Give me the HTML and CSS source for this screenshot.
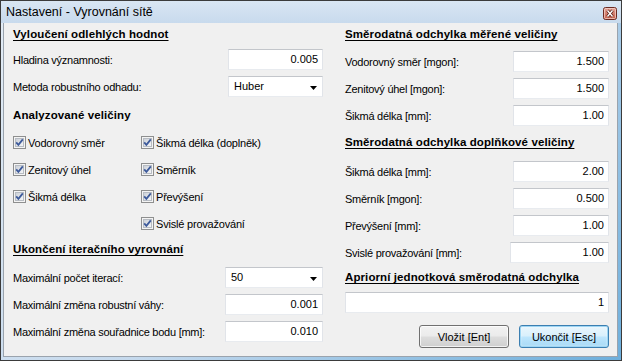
FILE: index.html
```html
<!DOCTYPE html>
<html lang="cs">
<head>
<meta charset="utf-8">
<title>Nastavení - Vyrovnání sítě</title>
<link rel="stylesheet" href="styles.css">
</head>
<body>
<svg class="defs" width="0" height="0" aria-hidden="true">
  <defs>
    <linearGradient id="cbfill" x1="0" y1="0" x2="1" y2="1">
      <stop offset="0" stop-color="#c9ced6"/>
      <stop offset="1" stop-color="#f7f8f9"/>
    </linearGradient>
    <linearGradient id="closefill" x1="0" y1="0" x2="0" y2="1">
      <stop offset="0" stop-color="#e5aa9f"/>
      <stop offset="0.5" stop-color="#d4806f"/>
      <stop offset="1" stop-color="#c4604d"/>
    </linearGradient>
  </defs>
</svg>
<div class="window">
  <div class="titlebar">
    <span class="title">Nastavení - Vyrovnání sítě</span>
    <span class="close">
      <svg width="14" height="13" viewBox="0 0 14 13">
        <rect x="0.5" y="0.5" width="13" height="12" rx="2" fill="url(#closefill)" stroke="#6b2a22"/>
        <rect x="1.5" y="1.5" width="11" height="10" rx="1" fill="none" stroke="#f6d6cf" stroke-opacity="0.7"/>
        <path d="M4.5 3.5 L9.5 9.5 M9.5 3.5 L4.5 9.5" stroke="#5a1c15" stroke-width="3"/>
        <path d="M4.5 3.5 L9.5 9.5 M9.5 3.5 L4.5 9.5" stroke="#ffffff" stroke-width="1.4"/>
      </svg>
    </span>
  </div>
  <div class="client">
    <div class="col col-left">
      <h2 class="heading ul">Vyloučení odlehlých hodnot</h2>
      <div class="rows rows-outlier">
        <div class="row"><span class="lbl">Hladina významnosti:</span><div class="field w-l1">0.005</div></div>
        <div class="row"><span class="lbl">Metoda robustního odhadu:</span><div class="combo w-l1"><span>Huber</span><svg class="arrow" width="7" height="4" viewBox="0 0 7 4"><path d="M0 0 H7 L3.5 4 Z" fill="#000"/></svg></div></div>
      </div>

      <h2 class="heading h-analyz">Analyzované veličiny</h2>
      <div class="checks">
        <label class="check"><svg class="cb" width="13" height="13" viewBox="0 0 13 13"><rect x="0.5" y="0.5" width="12" height="12" fill="#f4f4f4" stroke="#8e8f8f"/><rect x="2.5" y="2.5" width="8" height="8" fill="url(#cbfill)" stroke="#b7bcc3"/><path d="M3.2 6.3 L5.4 8.8 L9.8 3.4" fill="none" stroke="#3d5a9b" stroke-width="1.8"/></svg><span>Vodorovný směr</span></label>
        <label class="check"><svg class="cb" width="13" height="13" viewBox="0 0 13 13"><rect x="0.5" y="0.5" width="12" height="12" fill="#f4f4f4" stroke="#8e8f8f"/><rect x="2.5" y="2.5" width="8" height="8" fill="url(#cbfill)" stroke="#b7bcc3"/><path d="M3.2 6.3 L5.4 8.8 L9.8 3.4" fill="none" stroke="#3d5a9b" stroke-width="1.8"/></svg><span>Šikmá délka (doplněk)</span></label>
        <label class="check"><svg class="cb" width="13" height="13" viewBox="0 0 13 13"><rect x="0.5" y="0.5" width="12" height="12" fill="#f4f4f4" stroke="#8e8f8f"/><rect x="2.5" y="2.5" width="8" height="8" fill="url(#cbfill)" stroke="#b7bcc3"/><path d="M3.2 6.3 L5.4 8.8 L9.8 3.4" fill="none" stroke="#3d5a9b" stroke-width="1.8"/></svg><span>Zenitový úhel</span></label>
        <label class="check"><svg class="cb" width="13" height="13" viewBox="0 0 13 13"><rect x="0.5" y="0.5" width="12" height="12" fill="#f4f4f4" stroke="#8e8f8f"/><rect x="2.5" y="2.5" width="8" height="8" fill="url(#cbfill)" stroke="#b7bcc3"/><path d="M3.2 6.3 L5.4 8.8 L9.8 3.4" fill="none" stroke="#3d5a9b" stroke-width="1.8"/></svg><span>Směrník</span></label>
        <label class="check"><svg class="cb" width="13" height="13" viewBox="0 0 13 13"><rect x="0.5" y="0.5" width="12" height="12" fill="#f4f4f4" stroke="#8e8f8f"/><rect x="2.5" y="2.5" width="8" height="8" fill="url(#cbfill)" stroke="#b7bcc3"/><path d="M3.2 6.3 L5.4 8.8 L9.8 3.4" fill="none" stroke="#3d5a9b" stroke-width="1.8"/></svg><span>Šikmá délka</span></label>
        <label class="check"><svg class="cb" width="13" height="13" viewBox="0 0 13 13"><rect x="0.5" y="0.5" width="12" height="12" fill="#f4f4f4" stroke="#8e8f8f"/><rect x="2.5" y="2.5" width="8" height="8" fill="url(#cbfill)" stroke="#b7bcc3"/><path d="M3.2 6.3 L5.4 8.8 L9.8 3.4" fill="none" stroke="#3d5a9b" stroke-width="1.8"/></svg><span>Převýšení</span></label>
        <span class="check-empty"></span>
        <label class="check"><svg class="cb" width="13" height="13" viewBox="0 0 13 13"><rect x="0.5" y="0.5" width="12" height="12" fill="#f4f4f4" stroke="#8e8f8f"/><rect x="2.5" y="2.5" width="8" height="8" fill="url(#cbfill)" stroke="#b7bcc3"/><path d="M3.2 6.3 L5.4 8.8 L9.8 3.4" fill="none" stroke="#3d5a9b" stroke-width="1.8"/></svg><span>Svislé provažování</span></label>
      </div>

      <h2 class="heading ul h-iter">Ukončení iteračního vyrovnání</h2>
      <div class="rows rows-iter">
        <div class="row"><span class="lbl">Maximální počet iterací:</span><div class="combo w-l2"><span>50</span><svg class="arrow" width="7" height="4" viewBox="0 0 7 4"><path d="M0 0 H7 L3.5 4 Z" fill="#000"/></svg></div></div>
        <div class="row"><span class="lbl">Maximální změna robustní váhy:</span><div class="field w-l2">0.001</div></div>
        <div class="row"><span class="lbl">Maximální změna souřadnice bodu [mm]:</span><div class="field w-l2">0.010</div></div>
      </div>
    </div>

    <div class="col col-right">
      <h2 class="heading ul">Směrodatná odchylka měřené veličiny</h2>
      <div class="rows rows-measured">
        <div class="row"><span class="lbl">Vodorovný směr [mgon]:</span><div class="field w-r">1.500</div></div>
        <div class="row"><span class="lbl">Zenitový úhel [mgon]:</span><div class="field w-r">1.500</div></div>
        <div class="row"><span class="lbl">Šikmá délka [mm]:</span><div class="field w-r">1.00</div></div>
      </div>

      <h2 class="heading ul h-suppl">Směrodatná odchylka doplňkové veličiny</h2>
      <div class="rows rows-suppl">
        <div class="row"><span class="lbl">Šikmá délka [mm]:</span><div class="field w-r">2.00</div></div>
        <div class="row"><span class="lbl">Směrník [mgon]:</span><div class="field w-r">0.500</div></div>
        <div class="row"><span class="lbl">Převýšení [mm]:</span><div class="field w-r">1.00</div></div>
        <div class="row"><span class="lbl">Svislé provažování [mm]:</span><div class="field w-r2">1.00</div></div>
      </div>

      <h2 class="heading ul h-apriori">Apriorní jednotková směrodatná odchylka</h2>
      <div class="field field-wide">1</div>

      <div class="buttons">
        <button class="btn">Vložit [Ent]</button>
        <button class="btn btn-default">Ukončit [Esc]</button>
      </div>
    </div>
  </div>
</div>
</body>
</html>
```

FILE: styles.css
```css
html, body {
  margin: 0;
  padding: 0;
}

body {
  width: 622px;
  height: 361px;
  overflow: hidden;
  font-family: "Liberation Sans", Arial, sans-serif;
  font-size: 11px;
  color: #000;
}

.defs {
  position: absolute;
  width: 0;
  height: 0;
}

.window {
  width: 622px;
  height: 361px;
  box-sizing: border-box;
  border: 1px solid #3b3b3b;
  background: linear-gradient(135deg, #e3ecf5 0%, #c5d9ed 50%, #6eafdc 100%);
  display: flex;
  flex-direction: column;
}

.titlebar {
  height: 22px;
  flex: none;
  display: flex;
  align-items: center;
  justify-content: space-between;
  padding: 0 4px 0 5px;
  background: linear-gradient(to bottom, #d9e6f3, #c8daed);
}

.title {
  font-size: 12.5px;
  color: #000;
  line-height: 22px;
}

.close {
  display: flex;
  margin-top: 3px;
}

.client {
  flex: 1;
  margin: 0 3px 3px 2px;
  border: 1px solid #9aa3ad;
  border-top: none;
  background: #f0f0f0;
  display: flex;
  padding-left: 9px;
}

.col {
  display: flex;
  flex-direction: column;
}

.col-left {
  width: 310px;
}

.col-right {
  width: 264px;
  margin-left: 22px;
}

.heading {
  margin: 0;
  height: 22px;
  line-height: 22px;
  font-size: 11.5px;
  font-weight: bold;
  letter-spacing: 0.1px;
  white-space: nowrap;
}

.heading.ul {
  text-decoration: underline;
  text-underline-offset: 2px;
}

.row {
  height: 27px;
  display: flex;
  align-items: center;
  justify-content: space-between;
}

.lbl {
  white-space: nowrap;
  letter-spacing: -0.25px;
}

.field,
.combo {
  box-sizing: border-box;
  height: 21px;
  background: #fff;
  border: 1px solid;
  border-color: #c3c6cb #e1e4e9 #e8ebef #e1e4e9;
  line-height: 19px;
}

.field {
  text-align: right;
  padding: 0 4px;
}

.combo {
  display: flex;
  align-items: center;
  justify-content: space-between;
  padding: 0 5px 0 5px;
}

.arrow {
  display: block;
  margin-top: 2px;
}

.w-l1 { width: 95px; }
.w-l2 { width: 98px; }
.w-r  { width: 96px; }
.w-r2 { width: 99px; }

.rows-outlier { margin-top: 1px; }
.h-analyz { margin-top: 4px; }

.checks {
  margin-top: 3px;
  display: grid;
  grid-template-columns: 128px auto;
  grid-auto-rows: 27px;
}

.check {
  display: flex;
  align-items: center;
  gap: 2px;
  white-space: nowrap;
  letter-spacing: -0.2px;
}

.cb {
  display: block;
  flex: none;
}

.h-iter { margin-top: 1px; }
.rows-iter { margin-top: 4px; }

.rows-measured { margin-top: 3px; }
.h-suppl { margin-top: 2px; }
.rows-suppl { margin-top: 5px; }
.h-apriori { margin-top: 0; }

.field-wide {
  margin-top: 4px;
  width: 264px;
}

.buttons {
  margin-top: 12px;
  display: flex;
  justify-content: flex-end;
  gap: 10px;
}

.btn {
  width: 90px;
  height: 23px;
  box-sizing: border-box;
  padding: 0;
  font-family: "Liberation Sans", Arial, sans-serif;
  font-size: 11px;
  color: #000;
  border: 1px solid #707070;
  border-radius: 3px;
  background: linear-gradient(to bottom, #f2f2f2 0%, #ebebeb 48%, #dddddd 52%, #cfcfcf 100%);
  box-shadow: inset 0 0 0 1px rgba(255, 255, 255, 0.75);
}

.btn-default {
  border-color: #3c7fb1;
  background: linear-gradient(to bottom, #eaf6fd 0%, #d9f0fc 48%, #bee6fd 52%, #a7d9f5 100%);
  box-shadow: inset 0 0 0 1px #9ed6f4, inset 0 0 2px 1px rgba(255, 255, 255, 0.6);
}
```
